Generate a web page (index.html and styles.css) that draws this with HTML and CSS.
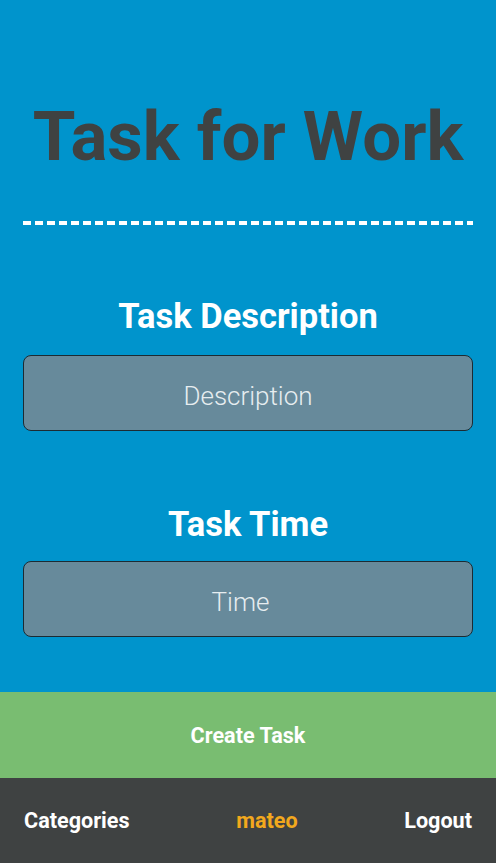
FILE: index.html
```html
<!DOCTYPE html>
<html lang="en">
<head>
<meta charset="utf-8">
<title>Task for Work</title>
<link rel="stylesheet" href="styles.css">
</head>
<body>
<div class="page">
  <main class="main">
    <h1 class="title">Task for Work</h1>
    <div class="divider"></div>
    <form class="form">
      <label class="label label-first" for="desc">Task Description</label>
      <input class="field" id="desc" type="text" placeholder="Description">
      <label class="label label-second" for="time">Task Time</label>
      <input class="field field-number" id="time" type="text" placeholder="Time">
    </form>
  </main>
  <button class="create" type="button">Create Task</button>
  <footer class="footer">
    <a class="nav-link" href="#">Categories</a>
    <span class="user">mateo</span>
    <a class="nav-link" href="#">Logout</a>
  </footer>
</div>
</body>
</html>
```

FILE: styles.css
```css
* { box-sizing: border-box; }
html, body { margin: 0; padding: 0; }
body {
  font-family: Roboto, "Liberation Sans", Arial, sans-serif;
  background: #3f4242;
}
.page {
  display: flex;
  flex-direction: column;
  min-height: 863px;
}
.main {
  background: #0094cc;
  padding: 102px 23px 55px;
  display: flex;
  flex-direction: column;
}
.title {
  margin: 0;
  font-size: 69px;
  line-height: 69px;
  font-weight: 700;
  color: #3f4242;
  text-align: center;
}
.divider {
  margin-top: 50px;
  height: 4px;
  background: repeating-linear-gradient(to right, #ffffff 0 8px, transparent 8px 12px);
}
.form {
  display: flex;
  flex-direction: column;
}
.label {
  display: block;
  font-size: 34.5px;
  line-height: 35px;
  font-weight: 700;
  color: #ffffff;
  text-align: center;
}
.label-first { margin-top: 74px; margin-bottom: 21px; }
.label-second { margin-top: 76px; margin-bottom: 19px; }
.field {
  display: block;
  width: 100%;
  height: 76px;
  border: 1px solid #1c2b33;
  border-radius: 8px;
  background: #678a9b;
  font-family: Roboto, "Liberation Sans", Arial, sans-serif;
  font-weight: 300;
  font-size: 26px;
  color: #eef3f5;
  text-align: center;
  outline: none;
  padding: 6px 8px 0;
}
.field::placeholder { color: #e6edf0; opacity: 1; }
.field-number { padding-right: 23px; }
.create {
  display: block;
  width: 100%;
  height: 86px;
  border: none;
  background: #79bd71;
  color: #ffffff;
  font-family: Roboto, "Liberation Sans", Arial, sans-serif;
  font-weight: 700;
  font-size: 21.6px;
  padding: 0;
}
.footer {
  flex: 1;
  background: #3f4242;
  display: flex;
  align-items: center;
  justify-content: space-between;
  padding: 0 24px;
}
.nav-link, .user {
  font-size: 21.6px;
  line-height: 22px;
  font-weight: 700;
  text-decoration: none;
  color: #ffffff;
}
.user { color: #f2a81d; }
```
